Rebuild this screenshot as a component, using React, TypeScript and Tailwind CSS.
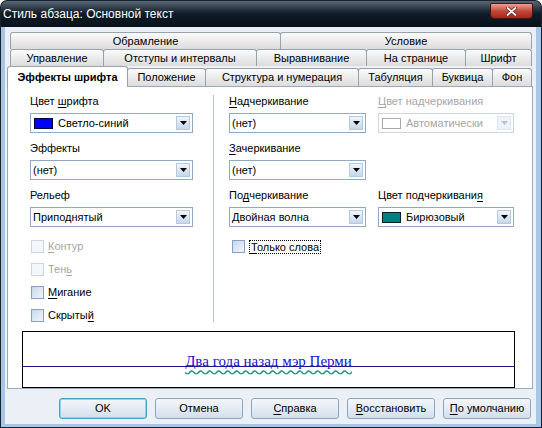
import React from "react";

// ─── Small pieces ─────────────────────────────────────────────────────────────
function Key({ children }: { children: React.ReactNode }) {
  return <span className="underline underline-offset-[2px]">{children}</span>;
}

function Arrow({ disabled }: { disabled?: boolean }) {
  return (
    <div
      className={`mr-[2px] ml-auto flex h-[14px] w-[14px] items-center justify-center border ${
        disabled
          ? "border-[#dde6f0] bg-[#eef3f9]"
          : "border-[#b6c9df] bg-linear-to-b from-[#f0f5fb] to-[#c6d7ea]"
      }`}
    >
      <svg width="7" height="4" viewBox="0 0 7 4">
        <path d="M0 0h7L3.5 4z" fill={disabled ? "#b7c3cf" : "#000"} />
      </svg>
    </div>
  );
}

function Dropdown({
  text,
  swatch,
  className = "",
  disabled,
}: {
  text: string;
  swatch?: string;
  className?: string;
  disabled?: boolean;
}) {
  return (
    <div
      className={`flex h-[20px] items-center border bg-white ${
        disabled ? "border-[#c9d7e6] text-[#a6a6a6]" : "border-[#8fa9c6] text-black"
      } ${className}`}
    >
      {swatch && <span className={`ml-[3px] h-[11px] w-[19px] border ${swatch}`} />}
      <span className={swatch ? "ml-[5px]" : "ml-[2px]"}>{text}</span>
      <Arrow disabled={disabled} />
    </div>
  );
}

function Check({
  children,
  disabled,
  focus,
  className = "",
}: {
  children: React.ReactNode;
  disabled?: boolean;
  focus?: boolean;
  className?: string;
}) {
  return (
    <div className={`flex h-[23px] items-center gap-[4px] ${className}`}>
      <span
        className={`h-[13px] w-[13px] border ${
          disabled
            ? "border-[#c8d6e5] bg-[#f3f6fa]"
            : "border-[#86a2c1] bg-linear-to-br from-[#c8d7e8] to-[#f2f6fa]"
        }`}
      />
      <span
        className={`${disabled ? "text-[#a6a6a6]" : "text-black"} ${
          focus ? "border border-dotted border-black px-px leading-[12px]" : ""
        }`}
      >
        {children}
      </span>
    </div>
  );
}

function Tab({
  label,
  className,
  active,
}: {
  label: string;
  className: string;
  active?: boolean;
}) {
  return (
    <div
      className={`-ml-px flex items-center justify-center rounded-t-[3px] border border-b-0 border-[#98a2ad] first:ml-0 ${
        active
          ? "relative z-10 -mb-px h-[21px] bg-white font-bold"
          : "bg-linear-to-b from-[#fbfbfb] to-[#dcdcdc]"
      } ${className}`}
    >
      {label}
    </div>
  );
}

function Button({ children, primary }: { children: React.ReactNode; primary?: boolean }) {
  return (
    <div
      className={`flex h-[21px] w-[88px] items-center justify-center rounded-[3px] border bg-linear-to-b from-[#f4f7fb] to-[#d3dfec] ${
        primary
          ? "border-[#3aa6c2] shadow-[inset_0_0_0_1px_#8fd6e8]"
          : "border-[#8ea5be]"
      }`}
    >
      {children}
    </div>
  );
}

// ─── Main component ───────────────────────────────────────────────────────────
export default function App() {
  return (
    <div className="flex h-[428px] w-[542px] flex-col rounded-t-[7px] bg-[#17232f] p-px font-['Liberation_Sans',Arial,sans-serif] text-[11px] leading-[13px] text-black">
      {/* ── TITLE BAR ── */}
      <div className="flex h-[26px] shrink-0 items-center rounded-t-[6px] bg-linear-to-b from-[#5a6875] via-[#0f1b26] to-[#08121b]">
        <span className="pl-[2px] text-[12px] text-white">Стиль абзаца: Основной текст</span>
        <div className="mr-[8px] mb-[6px] ml-auto flex h-[16px] w-[43px] items-center justify-center rounded-[2px] rounded-b-[4px] border border-[#4a1410] bg-linear-to-b from-[#e7a196] via-[#c4483a] to-[#a0281d]">
          <svg width="11" height="9" viewBox="0 0 11 9">
            <path d="M1.5 1l8 7M9.5 1l-8 7" stroke="#5a1a12" strokeWidth="3.2" strokeLinecap="round" />
            <path d="M1.5 1l8 7M9.5 1l-8 7" stroke="#fff" strokeWidth="1.8" strokeLinecap="round" />
          </svg>
        </div>
      </div>

      {/* ── BODY ── */}
      <div className="flex flex-1 flex-col border-r-[5px] border-b-[3px] border-l-[4px] border-[#a9c5e5] bg-[#eaf0f6]">
        {/* Tabs */}
        <div className="mt-[5px] ml-[5px] flex h-[17px]">
          <Tab label="Обрамление" className="h-[17px] w-[271px]" />
          <Tab label="Условие" className="h-[17px] w-[252px]" />
        </div>
        <div className="ml-[5px] flex h-[17px]">
          <Tab label="Управление" className="h-[17px] w-[94px]" />
          <Tab label="Отступы и интервалы" className="h-[17px] w-[154px]" />
          <Tab label="Выравнивание" className="h-[17px] w-[111px]" />
          <Tab label="На странице" className="h-[17px] w-[100px]" />
          <Tab label="Шрифт" className="h-[17px] w-[67px]" />
        </div>
        <div className="ml-[2px] flex h-[20px] items-end">
          <Tab label="Эффекты шрифта" className="w-[121px]" active />
          <Tab label="Положение" className="h-[18px] w-[79px]" />
          <Tab label="Структура и нумерация" className="h-[18px] w-[154px]" />
          <Tab label="Табуляция" className="h-[18px] w-[75px]" />
          <Tab label="Буквица" className="h-[18px] w-[61px]" />
          <Tab label="Фон" className="h-[18px] w-[40px]" />
        </div>

        {/* Panel */}
        <div className="ml-[2px] flex h-[303px] w-[526px] flex-col border border-[#9aabbf] bg-white pt-[8px]">
          <div className="flex">
            {/* Left column */}
            <div className="ml-[22px] flex w-[163px] flex-col">
              <div>Цвет <Key>ш</Key>рифта</div>
              <Dropdown className="mt-[5px]" text="Светло-синий" swatch="bg-[#0000ff] border-[#000040]" />
              <div className="mt-[9px]">Эффекты</div>
              <Dropdown className="mt-[5px]" text="(нет)" />
              <div className="mt-[9px]">Рельеф</div>
              <Dropdown className="mt-[5px]" text="Приподнятый" />
              <div className="mt-[8px]">
                <Check disabled className="ml-px"><Key>К</Key>онтур</Check>
                <Check disabled className="ml-px">Тен<Key>ь</Key></Check>
                <Check className="ml-px"><Key>М</Key>игание</Check>
                <Check className="ml-px">Скрыты<Key>й</Key></Check>
              </div>
            </div>

            {/* Separator */}
            <div className="ml-[20px] h-[227px] w-px bg-[#b3c3d5]" />

            {/* Middle + right columns */}
            <div className="ml-[15px] flex flex-col">
              <div className="flex">
                <div className="flex w-[137px] flex-col">
                  <div><Key>Н</Key>адчеркивание</div>
                  <Dropdown className="mt-[5px]" text="(нет)" />
                </div>
                <div className="ml-[12px] flex w-[136px] flex-col">
                  <div className="text-[#a6a6a6]"><Key>Ц</Key>вет надчеркивания</div>
                  <Dropdown className="mt-[5px]" text="Автоматически" swatch="bg-white border-[#a9a9a9]" disabled />
                </div>
              </div>
              <div className="mt-[9px] flex w-[137px] flex-col">
                <div><Key>З</Key>ачеркивание</div>
                <Dropdown className="mt-[5px]" text="(нет)" />
              </div>
              <div className="mt-[9px] flex">
                <div className="flex w-[137px] flex-col">
                  <div>По<Key>д</Key>черкивание</div>
                  <Dropdown className="mt-[5px]" text="Двойная волна" />
                </div>
                <div className="ml-[12px] flex w-[136px] flex-col">
                  <div>Цвет подчеркивани<Key>я</Key></div>
                  <Dropdown className="mt-[5px]" text="Бирюзовый" swatch="bg-[#008080] border-[#002020]" />
                </div>
              </div>
              <Check focus className="mt-[8px] ml-[3px]"><Key>Т</Key>олько слова</Check>
            </div>
          </div>

          {/* Preview */}
          <div className="mt-[4px] ml-[14px] h-[57px] w-[493px] border border-black bg-[linear-gradient(to_bottom,transparent_34px,#1e1a8c_34px,#1e1a8c_35px,transparent_35px)]">
            <div className="pt-[21px] text-center font-['Liberation_Serif','Times_New_Roman',serif] text-[15px] leading-[16px] text-[#1010d8] underline decoration-[#2a8f86] decoration-wavy underline-offset-[3px]">
              Два года назад мэр Перми
            </div>
          </div>
        </div>

        {/* Buttons */}
        <div className="mt-[9px] flex justify-end gap-[8px] pr-[5px]">
          <Button primary>OK</Button>
          <Button>Отмена</Button>
          <Button><Key>С</Key>правка</Button>
          <Button><Key>В</Key>осстановить</Button>
          <Button><Key>П</Key>о умолчанию</Button>
        </div>
      </div>
    </div>
  );
}
